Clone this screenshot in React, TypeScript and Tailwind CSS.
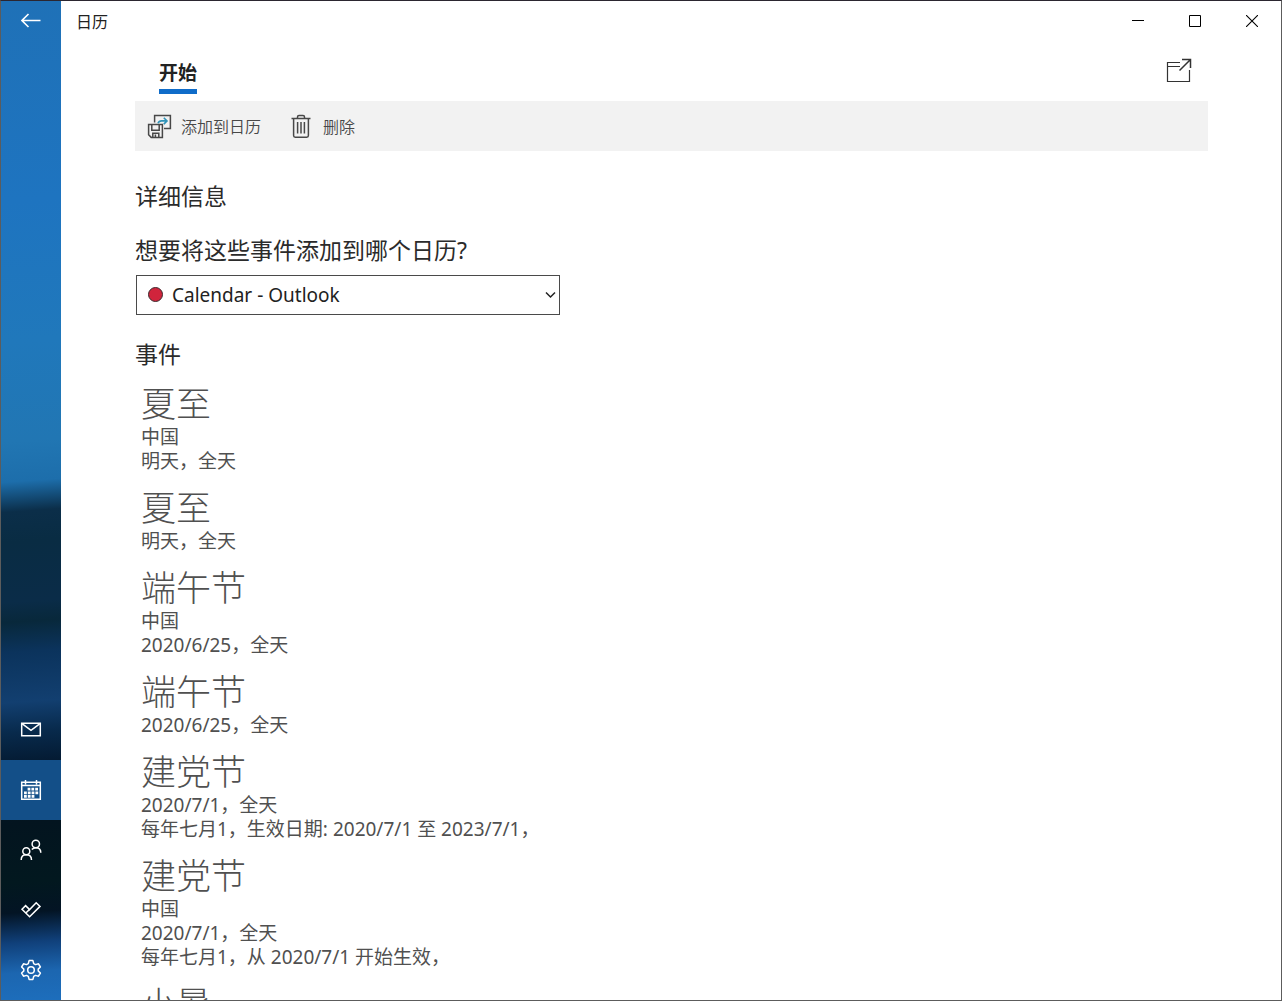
import type { ReactNode } from "react";
import clsx from "clsx";

type CalendarEvent = {
  title: string;
  lines: string[];
};

const events: CalendarEvent[] = [
  { title: "夏至", lines: ["中国", "明天，全天"] },
  { title: "夏至", lines: ["明天，全天"] },
  { title: "端午节", lines: ["中国", "2020/6/25，全天"] },
  { title: "端午节", lines: ["2020/6/25，全天"] },
  { title: "建党节", lines: ["2020/7/1，全天", "每年七月1，生效日期: 2020/7/1 至 2023/7/1，"] },
  { title: "建党节", lines: ["中国", "2020/7/1，全天", "每年七月1，从 2020/7/1 开始生效，"] },
  { title: "小暑", lines: ["中国", "2020/7/6，全天"] },
];

function Icon({ size, children }: { size: number; children: ReactNode }) {
  return (
    <svg
      width={size}
      height={size}
      viewBox={`0 0 ${size} ${size}`}
      fill="none"
      stroke="currentColor"
      strokeWidth={1.5}
      className="shrink-0"
      aria-hidden
    >
      {children}
    </svg>
  );
}

const navItems = [
  {
    label: "邮件",
    icon: (
      <Icon size={24}>
        <path d="M2.7 5.2h18.6v12.6H2.7z" />
        <path d="M3 5.6l9 6.8 9-6.8" />
      </Icon>
    ),
  },
  {
    label: "日历",
    active: true,
    icon: (
      <Icon size={24}>
        <path d="M2.7 4.2h18.6v17H2.7zM2.7 7.6h18.6M6.5 2v4.4M17.5 2v4.4" />
        <path d="M8.6 11.2h10.6M5 14.8h14.2M5 18.4h10.6" strokeWidth={2.8} strokeDasharray="2.8 1" />
      </Icon>
    ),
  },
  {
    label: "人脉",
    icon: (
      <Icon size={24}>
        <circle cx="7.3" cy="13.2" r="3.5" />
        <path d="M2.2 22c0-3.1 2-5.2 5.1-5.2s5.2 2.1 5.2 5.2" />
        <circle cx="16.8" cy="6" r="3.7" />
        <path d="M12.8 11.6c1-1.2 2.3-1.9 4-1.9 3 0 5 2 5 5" />
      </Icon>
    ),
  },
  {
    label: "待办",
    icon: (
      <Icon size={24}>
        <path d="M3 11.2l3.6-3.6 4 4 6.6-6.8 3.8 3.6L10.6 18.8z" />
        <path d="M6.8 15l3.8-3.6" />
      </Icon>
    ),
  },
  {
    label: "设置",
    icon: (
      <Icon size={24}>
        <path
          d="M9.3 5.6l.8-3h3.8l.8 3 1.8 1 3-.8 1.9 3.2-2.2 2.1v1.8l2.2 2.1-1.9 3.2-3-.8-1.8 1-.8 3h-3.8l-.8-3-1.8-1-3 .8-1.9-3.2 2.2-2.1v-1.8L2.6 9l1.9-3.2 3 .8z"
          strokeLinejoin="round"
        />
        <circle cx="12" cy="12" r="3.3" />
      </Icon>
    ),
  },
];

function Sidebar() {
  return (
    <aside className="flex w-[60px] shrink-0 flex-col bg-[linear-gradient(176deg,#1f71b7_0%,#1e74c0_20%,#2078bb_34%,#2176b3_44%,#1d6eab_48%,#0b2e49_51%,#092c43_54%,#0a2c48_60%,#08283b_62%,#0b335c_65%,#123f70_70%,#082a4c_73%,#041b33_76%,#03141f_82%,#02181f_88%,#031424_91%,#10407a_94%,#1c66b0_97%,#1d6ebc_100%)] text-white">
      <button type="button" aria-label="返回" className="flex h-10 items-center justify-center">
        <Icon size={20}>
          <path d="M.5 9.5h19M7.5 3L1 9.5 7.5 16" strokeWidth={1.6} />
        </Icon>
      </button>
      <nav className="mt-auto flex flex-col">
        {navItems.map((item) => (
          <button
            key={item.label}
            type="button"
            aria-label={item.label}
            className={clsx("flex h-[60px] items-center justify-center", item.active && "bg-[#134f88]")}
          >
            {item.icon}
          </button>
        ))}
      </nav>
    </aside>
  );
}

function TitleBar() {
  return (
    <header className="flex h-[42px] shrink-0 items-stretch justify-between pl-[15px]">
      <h1 className="self-center text-base leading-5 text-[#222]">日历</h1>
      <div className="flex h-10 pr-px text-black">
        <button type="button" aria-label="最小化" className="flex w-[57px] items-center justify-center">
          <Icon size={12}>
            <path d="M0 5.5h12" strokeWidth={1} />
          </Icon>
        </button>
        <button type="button" aria-label="最大化" className="flex w-[57px] items-center justify-center">
          <Icon size={12}>
            <path d="M.5.5h11v11H.5z" strokeWidth={1} />
          </Icon>
        </button>
        <button type="button" aria-label="关闭" className="flex w-[57px] items-center justify-center">
          <Icon size={12}>
            <path d="M0 0l12 12M12 0L0 12" strokeWidth={1.1} />
          </Icon>
        </button>
      </div>
    </header>
  );
}

function Ribbon() {
  return (
    <>
      <div className="flex h-[58px] items-start justify-between pr-4 pl-6">
        <button type="button" className="mt-4 border-b-5 border-[#0f6cc9] pb-0.5 text-[19px] leading-7 font-bold text-[#222]">
          开始
        </button>
        <button type="button" aria-label="在新窗口中打开" className="mt-[15px] text-[#333]">
          <Icon size={26}>
            <path d="M14 4.5H1.5v19h22V12M1.5 8.5H14" strokeWidth={1.2} />
            <path d="M13.5 12.5L24.5 1.5M16 1.6h8.5V10" strokeWidth={1.5} />
          </Icon>
        </button>
      </div>
      <div className="flex h-[50px] items-center gap-7 bg-[#f2f2f2] px-3 pt-0.5 text-base font-[350] text-[#484848]">
        <button type="button" className="flex items-center gap-2">
          <Icon size={26}>
            <path d="M7.6 8.5V1.6h15.8v12.8H17" />
            <path d="M1.6 10.6h13.8v12.8H4.2l-2.6-2.6z" />
            <path d="M4.8 10.8v5.4h7.4v-5.4M5.8 23.2v-4h6v4M8.4 20.5v2.6" />
            <path d="M11 9.3c.6-1.6 1.8-2.4 3.6-2.4h5.2M16.8 3.7l3.2 3.2-3.2 3.2" stroke="#2f93b8" strokeWidth={1.6} />
          </Icon>
          添加到日历
        </button>
        <button type="button" className="flex items-center gap-2">
          <Icon size={26}>
            <path d="M2.5 4.5h19M8.5 4.3V3c0-1 .6-1.5 1.5-1.5h4c.9 0 1.5.5 1.5 1.5v1.3M4.6 4.6v17c0 1 .6 1.6 1.6 1.6h11.6c1 0 1.6-.6 1.6-1.6v-17M8.6 8v11.5M12 8v11.5M15.4 8v11.5" />
          </Icon>
          删除
        </button>
      </div>
    </>
  );
}

export default function App() {
  return (
    <div
      lang="zh-CN"
      className="flex h-screen overflow-hidden border border-[#5c5c5c] border-t-[#2b2630] bg-white font-['Noto_Sans','Noto_Sans_CJK_SC',sans-serif]"
    >
      <Sidebar />
      <main className="flex min-w-0 flex-1 flex-col">
        <TitleBar />
        <div className="min-h-0 flex-1 overflow-hidden pr-[73px] pl-[74px]">
          <Ribbon />
          <h2 className="mt-[29px] text-[23px] leading-8 text-[#2b2b2b]">详细信息</h2>
          <label htmlFor="calendar" className="mt-[22px] block text-[23px] leading-8 text-[#2b2b2b]">
            想要将这些事件添加到哪个日历?
          </label>
          <div className="relative mt-[9px] ml-px w-[424px] max-w-full">
            <select
              id="calendar"
              className="block h-10 w-full appearance-none border border-[#4a4a4a] bg-white pr-8 pl-[35px] text-[19px] text-[#222]"
            >
              <option>Calendar - Outlook</option>
            </select>
            <span className="pointer-events-none absolute top-3 left-3 size-[15px] rounded-full border border-[#3d2a2e] bg-[#d0243c]" />
            <svg
              className="pointer-events-none absolute top-4 right-1 text-[#222]"
              width="11"
              height="8"
              viewBox="0 0 11 8"
              fill="none"
              stroke="currentColor"
              strokeWidth="1.5"
              aria-hidden
            >
              <path d="M1 1.5l4.5 4.5L10 1.5" />
            </svg>
          </div>
          <h2 className="mt-[23px] text-[23px] leading-8 text-[#2b2b2b]">事件</h2>
          <ul className="mt-[13px] flex flex-col gap-3.5 pl-1.5 text-[#505050]">
            {events.map((event, index) => (
              <li key={index}>
                <h3 className="text-[35px] leading-[42px] font-light">{event.title}</h3>
                {event.lines.map((line) => (
                  <p key={line} className="text-[19px] leading-6">
                    {line}
                  </p>
                ))}
              </li>
            ))}
          </ul>
        </div>
      </main>
    </div>
  );
}
